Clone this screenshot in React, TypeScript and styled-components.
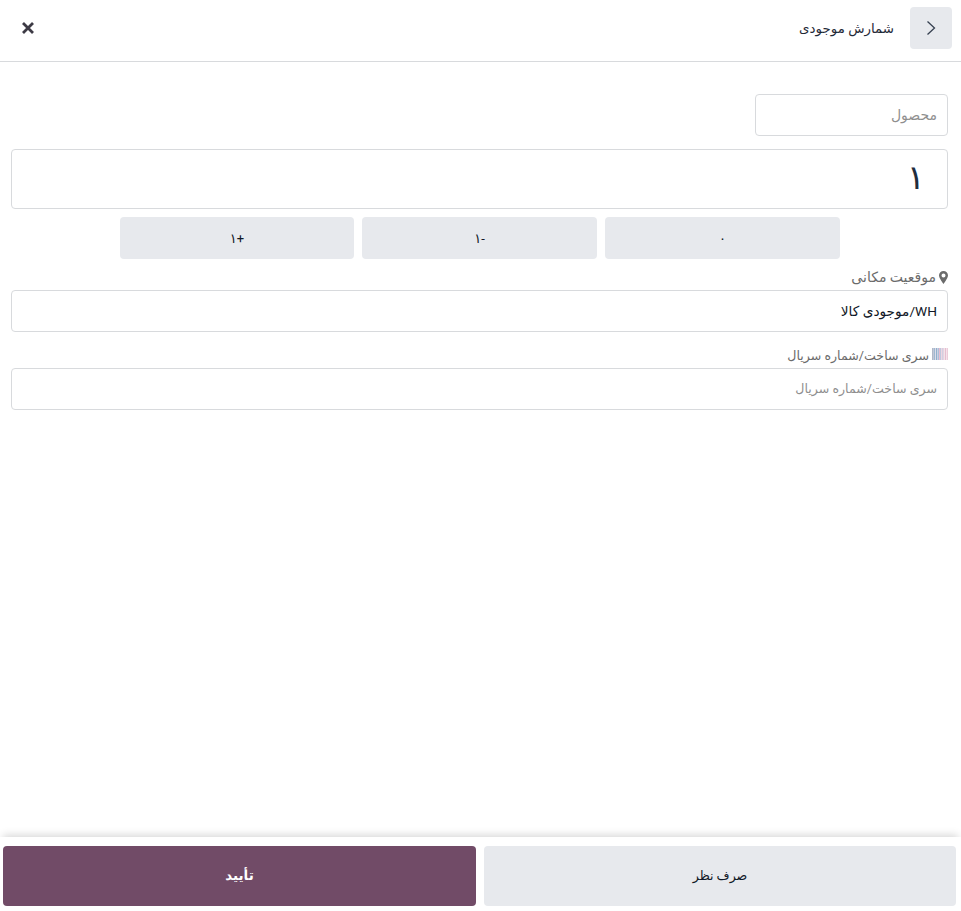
import styled, { createGlobalStyle } from "styled-components";

const GlobalStyle = createGlobalStyle`
  html, body {
    margin: 0;
    padding: 0;
    background: #fff;
  }
  * {
    box-sizing: border-box;
  }
`;

const BARCODE_STRIPES = [
  "#eccbd9", "#f3e3ea", "#e6bdd0", "#f3e3ea", "#e4d4e0", "#d3cfe2",
  "#eed7e2", "#bfc8de", "#e6bdd0", "#acbfd8", "#cdd0e2", "#8fb0cc",
  "#dcdce8", "#9fb8d0", "#c2c8d8", "#b0b8c8",
];

const Page = styled.div`
  display: flex;
  flex-direction: column;
  height: 911px;
  overflow: hidden;
  font-family: Roboto, "DejaVu Sans", sans-serif;
  font-size: 13px;
  color: #111827;
`;

const Header = styled.header`
  display: flex;
  align-items: center;
  justify-content: space-between;
  height: 62px;
  padding: 0 9px 5px 21px;
  border-bottom: 1px solid #d8dadd;
`;

const Title = styled.div`
  display: flex;
  align-items: center;
  gap: 16px;
`;

const TitleText = styled.span`
  font-size: 13.4px;
  color: #1f2937;
`;

const BackButton = styled.button`
  display: flex;
  align-items: center;
  justify-content: center;
  width: 42px;
  height: 42px;
  padding: 0;
  border: none;
  border-radius: 4px;
  background: #e7e9ed;
`;

const CloseButton = styled.button`
  display: flex;
  width: 14px;
  height: 14px;
  padding: 0;
  border: none;
  background: none;
`;

const Form = styled.main`
  flex: 1;
  display: flex;
  flex-direction: column;
  align-items: flex-end;
  padding: 32px 13px 0 11px;
`;

const Field = styled.div<{ $width?: number; $height?: number; $size?: number; $muted?: boolean }>`
  display: flex;
  align-items: center;
  justify-content: flex-start;
  width: ${({ $width }) => ($width ? `${$width}px` : "100%")};
  height: ${({ $height }) => $height ?? 42}px;
  padding: 0 10px 1px;
  border: 1px solid #d8dadd;
  border-radius: 4px;
  direction: rtl;
  font-size: ${({ $size }) => $size ?? 13}px;
  color: ${({ $muted }) => ($muted ? "#8f8f8f" : "#111827")};
`;

const QuantityField = styled(Field)`
  margin-top: 13px;
  padding: 0 22px 4px;
  color: #1f2d3d;
`;

const QuickButtons = styled.div`
  display: grid;
  grid-template-columns: 234px 235px 235px;
  gap: 8px;
  margin: 8px 108px 0 0;
`;

const QuickButton = styled.button`
  height: 42px;
  padding: 0;
  border: none;
  border-radius: 4px;
  background: #e7e9ed;
  color: #111827;
  font: inherit;
  font-size: 13px;
  direction: rtl;
`;

const FieldLabel = styled.label<{ $first?: boolean; $size: number }>`
  display: flex;
  align-items: center;
  gap: 3px;
  height: 23px;
  padding-bottom: 3px;
  margin-top: ${({ $first }) => ($first ? "8px" : "13px")};
  direction: rtl;
  color: #6b6b6b;
  font-size: ${({ $size }) => $size}px;
`;

const Barcode = styled.span`
  display: flex;
  width: 16px;
  height: 12px;
  margin-bottom: 3px;
`;

const BarcodeStripe = styled.i`
  flex: 1;
`;

const Footer = styled.footer`
  display: grid;
  grid-template-columns: 473px 472px;
  gap: 8px;
  height: 74px;
  padding: 9px 5px 5px 3px;
  box-shadow: 0 -5px 8px -3px rgba(0, 0, 0, 0.16);
`;

const FooterButton = styled.button<{ $primary?: boolean }>`
  height: 60px;
  padding: 0 0 2px;
  border: none;
  border-radius: 4px;
  background: ${({ $primary }) => ($primary ? "#714b67" : "#e7e9ed")};
  color: ${({ $primary }) => ($primary ? "#fff" : "#111827")};
  font: inherit;
  font-size: ${({ $primary }) => ($primary ? "13.5px" : "12.6px")};
  font-weight: ${({ $primary }) => ($primary ? 600 : 400)};
`;

const App = () => {
  return (
    <Page>
      <GlobalStyle />
      <Header>
        <CloseButton aria-label="close">
          <svg width="14" height="14" viewBox="0 0 14 14">
            <path d="M2 2l10 10M12 2L2 12" stroke="#3d3a45" strokeWidth="2.8" strokeLinecap="butt" fill="none" />
          </svg>
        </CloseButton>
        <Title>
          <TitleText dir="rtl">شمارش موجودی</TitleText>
          <BackButton aria-label="back">
            <svg width="10" height="16" viewBox="0 0 10 16">
              <path d="M1.5 1.5L8.5 8l-7 6.5" stroke="#374151" strokeWidth="1.3" fill="none" />
            </svg>
          </BackButton>
        </Title>
      </Header>
      <Form>
        <Field $width={193} $size={14} $muted>محصول</Field>
        <QuantityField $height={60} $size={34}>۱</QuantityField>
        <QuickButtons>
          <QuickButton>+۱</QuickButton>
          <QuickButton>-۱</QuickButton>
          <QuickButton>۰</QuickButton>
        </QuickButtons>
        <FieldLabel $first $size={14}>
          <svg width="9" height="13" viewBox="0 0 9 13">
            <path fillRule="evenodd" d="M4.5 0A4.5 4.5 0 0 0 0 4.5C0 7 4.5 13 4.5 13S9 7 9 4.5A4.5 4.5 0 0 0 4.5 0zm0 6.5a2 2 0 1 1 0-4 2 2 0 0 1 0 4z" fill="#6b6b6b" />
          </svg>
          موقعیت مکانی
        </FieldLabel>
        <Field $size={13.7}>WH/موجودی کالا</Field>
        <FieldLabel $size={12.6}>
          <Barcode>
            {BARCODE_STRIPES.map((color, i) => (
              <BarcodeStripe key={i} style={{ background: color }} />
            ))}
          </Barcode>
          سری ساخت/شماره سریال
        </FieldLabel>
        <Field $size={12.6} $muted>سری ساخت/شماره سریال</Field>
      </Form>
      <Footer>
        <FooterButton $primary>تأیید</FooterButton>
        <FooterButton>صرف نظر</FooterButton>
      </Footer>
    </Page>
  );
};

export default App;
